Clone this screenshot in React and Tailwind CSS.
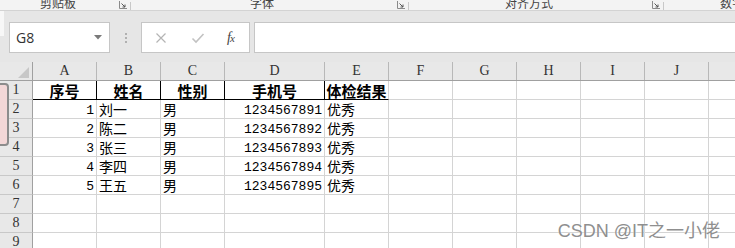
import React from 'react';

const COLS = [
  { key: 'A', w: 'w-[64px]' },
  { key: 'B', w: 'w-[64px]' },
  { key: 'C', w: 'w-[64px]' },
  { key: 'D', w: 'w-[100px]' },
  { key: 'E', w: 'w-[64px]' },
  { key: 'F', w: 'w-[64px]' },
  { key: 'G', w: 'w-[64px]' },
  { key: 'H', w: 'w-[64px]' },
  { key: 'I', w: 'w-[64px]' },
  { key: 'J', w: 'w-[64px]' },
  { key: 'K', w: 'w-[64px]' },
];

const HEAD = ['序号', '姓名', '性别', '手机号', '体检结果'];

const ROWS = [
  ['1', '刘一', '男', '1234567891', '优秀'],
  ['2', '陈二', '男', '1234567892', '优秀'],
  ['3', '张三', '男', '1234567893', '优秀'],
  ['4', '李四', '男', '1234567894', '优秀'],
  ['5', '王五', '男', '1234567895', '优秀'],
];

const MONO = "font-['Liberation_Mono','Noto_Sans_CJK_SC',monospace]";
const SERIF = "font-['Liberation_Serif',serif]";
const CJK = "font-['Noto_Sans_CJK_SC',sans-serif]";

function Launcher() {
  return (
    <svg width="8" height="8" viewBox="0 0 8 8" className="mb-[1px] shrink-0">
      <path d="M0.5 0 V7.5 H8" fill="none" stroke="#8a8a8a" strokeWidth="1" />
      <path d="M2.5 2.5 L6 6 M6 3.5 V6 H3.5" fill="none" stroke="#555" strokeWidth="1" />
    </svg>
  );
}

function Ribbon() {
  return (
    <div className="h-[11px] bg-[#f3f3f3] border-b border-[#d3d3d3] overflow-hidden">
      <div className={`flex items-end h-full text-[12px] leading-[12px] text-[#444] whitespace-nowrap ${CJK}`}>
        <span className="ml-[40px] w-[79px] shrink-0 mb-[1px]">剪贴板</span>
        <Launcher />
        <div className="ml-[3px] w-px h-[8px] shrink-0 bg-[#c8c8c8]" />
        <span className="ml-[119px] w-[147px] shrink-0 mb-[1px]">字体</span>
        <Launcher />
        <div className="ml-[3px] w-px h-[8px] shrink-0 bg-[#c8c8c8]" />
        <span className="ml-[96px] w-[147px] shrink-0 mb-[1px]">对齐方式</span>
        <Launcher />
        <div className="ml-[3px] w-px h-[8px] shrink-0 bg-[#c8c8c8]" />
        <span className="ml-[56px] shrink-0 mb-[1px]">数字</span>
      </div>
    </div>
  );
}

function FormulaBar() {
  return (
    <div className="h-[51px] flex items-start pt-[11px] pl-[9px]">
      <div className="w-[101px] h-[31px] bg-white border border-[#c6c6c6] flex items-center pl-[6px] pr-[7px]">
        <span className="flex-1 text-[14px] text-[#333] font-['Open_Sans',sans-serif]">G8</span>
        <svg width="8" height="5" viewBox="0 0 8 5">
          <path d="M0 0 H8 L4 4.5 Z" fill="#7a7a7a" />
        </svg>
      </div>
      <div className="w-[31px] h-[31px] flex flex-col items-center justify-center gap-[2px]">
        <div className="w-[2px] h-[2px] bg-[#b0b0b0]" />
        <div className="w-[2px] h-[2px] bg-[#b0b0b0]" />
        <div className="w-[2px] h-[2px] bg-[#b0b0b0]" />
      </div>
      <div className="w-[109px] h-[31px] bg-white border border-[#c6c6c6] flex items-center">
        <svg width="12" height="12" viewBox="0 0 12 12" className="ml-[13px]">
          <path d="M1.5 1.5 L10.5 10.5 M10.5 1.5 L1.5 10.5" stroke="#b4b4b4" strokeWidth="1.2" />
        </svg>
        <svg width="14" height="12" viewBox="0 0 14 12" className="ml-[24px]">
          <path d="M1.5 6.5 L5 10 L12.5 2" fill="none" stroke="#c2c2c2" strokeWidth="1.6" />
        </svg>
        <span className="ml-[22px] text-[14px] italic text-[#444] font-['Liberation_Serif',serif] tracking-[-1px]">
          f<span className="text-[11px]">x</span>
        </span>
      </div>
      <div className="ml-[4px] flex-1 h-[31px] bg-white border border-[#c6c6c6] border-r-0" />
    </div>
  );
}

function RowNum({ n }) {
  return (
    <div className={`w-[33px] shrink-0 bg-[#e8e8e8] border-r border-b border-[#a0a0a0] border-b-[#c8c8c8] flex items-center justify-center text-[14px] leading-none text-[#333] ${SERIF}`}>
      {n}
    </div>
  );
}

function Sheet() {
  return (
    <div className="flex flex-col">
      {/* column headers */}
      <div className="flex h-[19px] border-b border-[#a0a0a0] bg-[#e8e8e8]">
        <div className="w-[33px] shrink-0 border-r border-[#a0a0a0] flex items-end justify-end pr-[3px] pb-[2px]">
          <svg width="11" height="11" viewBox="0 0 11 11">
            <path d="M11 0 V11 H0 Z" fill="#c7c7c7" />
          </svg>
        </div>
        {COLS.map(c => (
          <div
            key={c.key}
            className={`${c.w} shrink-0 border-r border-[#b8b8b8] flex items-center justify-center text-[14px] leading-none text-[#333] ${SERIF}`}
          >
            {c.key}
          </div>
        ))}
      </div>

      {/* row 1 */}
      <div className="flex h-[19px]">
        <RowNum n={1} />
        {COLS.map((c, i) => {
          const boxed = i < 5;
          const right = i < 4 ? 'border-r-black' : 'border-r-[#d4d4d4]';
          return (
            <div
              key={c.key}
              className={`${c.w} shrink-0 border-r border-b border-[#d4d4d4] ${boxed ? `border-b-black ${right}` : ''} flex items-center justify-center text-[15px] leading-none font-bold text-black ${CJK}`}
            >
              {HEAD[i] || ''}
            </div>
          );
        })}
      </div>

      {/* data rows and blanks */}
      {[...ROWS, null, null, null].map((r, ri) => (
        <div key={ri} className="flex h-[19px]">
          <RowNum n={ri + 2} />
          {COLS.map((c, i) => {
            const v = r ? r[i] : '';
            const num = i === 0 || i === 3;
            return (
              <div
                key={c.key}
                className={`${c.w} shrink-0 border-r border-b border-[#d4d4d4] flex items-center leading-none text-black ${num ? `justify-end pr-[2px] pt-[2px] text-[13px] ${MONO}` : `pl-[2px] text-[14px] ${CJK}`}`}
              >
                {v || ''}
              </div>
            );
          })}
        </div>
      ))}
    </div>
  );
}

export default function App() {
  return (
    <div className="relative w-[735px] h-[248px] overflow-hidden bg-[#e6e6e6]">
      <Ribbon />
      <FormulaBar />
      <div className="bg-white">
        <Sheet />
      </div>

      {/* window edge sliver on the left of the formula bar */}
      <div className="absolute left-0 top-[11px] w-[4px] h-[25px] bg-[#f7f7f7]" />

      {/* side tab floating over the row headers */}
      <div className="absolute left-0 top-[83px] w-[9px] h-[63px] rounded-r-[4px] border-2 border-l-0 border-[#8c8c8c] bg-[#f3d7d7]" />

      {/* watermark */}
      <div className="absolute right-[15px] bottom-[8px] text-[18px] leading-none text-[#8f8f8f] font-['Liberation_Sans','Noto_Sans_CJK_SC',sans-serif] [text-shadow:0_0_2px_#fff]">
        CSDN @IT之一小佬
      </div>
    </div>
  );
}
